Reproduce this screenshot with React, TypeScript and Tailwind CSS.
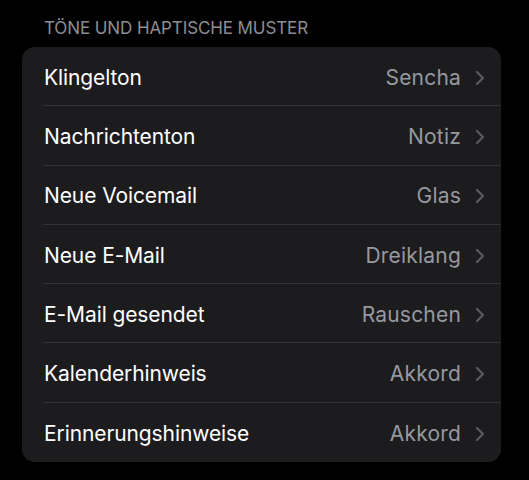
const rows = [
  { label: 'Klingelton', value: 'Sencha' },
  { label: 'Nachrichtenton', value: 'Notiz' },
  { label: 'Neue Voicemail', value: 'Glas' },
  { label: 'Neue E-Mail', value: 'Dreiklang' },
  { label: 'E-Mail gesendet', value: 'Rauschen' },
  { label: 'Kalenderhinweis', value: 'Akkord' },
  { label: 'Erinnerungshinweise', value: 'Akkord' },
];

function Chevron() {
  return (
    <svg width="10" height="16" viewBox="0 0 10 16" fill="none" className="ml-[14px]">
      <path d="M2 2 L8 8 L2 14" stroke="#5b5b60" strokeWidth="2.2" strokeLinecap="round" strokeLinejoin="round" />
    </svg>
  );
}

export default function App() {
  return (
    <div className="min-h-[480px] w-full bg-black pt-[17px] font-['Inter','Noto_Sans',sans-serif]">
      <div className="mb-[8px] pl-[44px] text-[17px] leading-[22px] tracking-[-0.1px] text-[#8d8d93] uppercase">
        Töne und haptische Muster
      </div>
      <div className="mx-[22px] w-[479px] overflow-hidden rounded-[13px] bg-[#1c1c1e]">
        {rows.map((row, i) => (
          <div key={row.label} className="pl-[21px]">
            <div
              className={`flex h-[59.3px] items-center pt-[3px] pr-[16px] ${
                i < rows.length - 1 ? 'border-b border-[#323235]' : ''
              }`}
            >
              <span className="flex-1 pl-px text-[21px] tracking-[-0.1px] text-white">{row.label}</span>
              <span className="text-[21px] tracking-[0.2px] text-[#98989f]">{row.value}</span>
              <Chevron />
            </div>
          </div>
        ))}
      </div>
    </div>
  );
}
